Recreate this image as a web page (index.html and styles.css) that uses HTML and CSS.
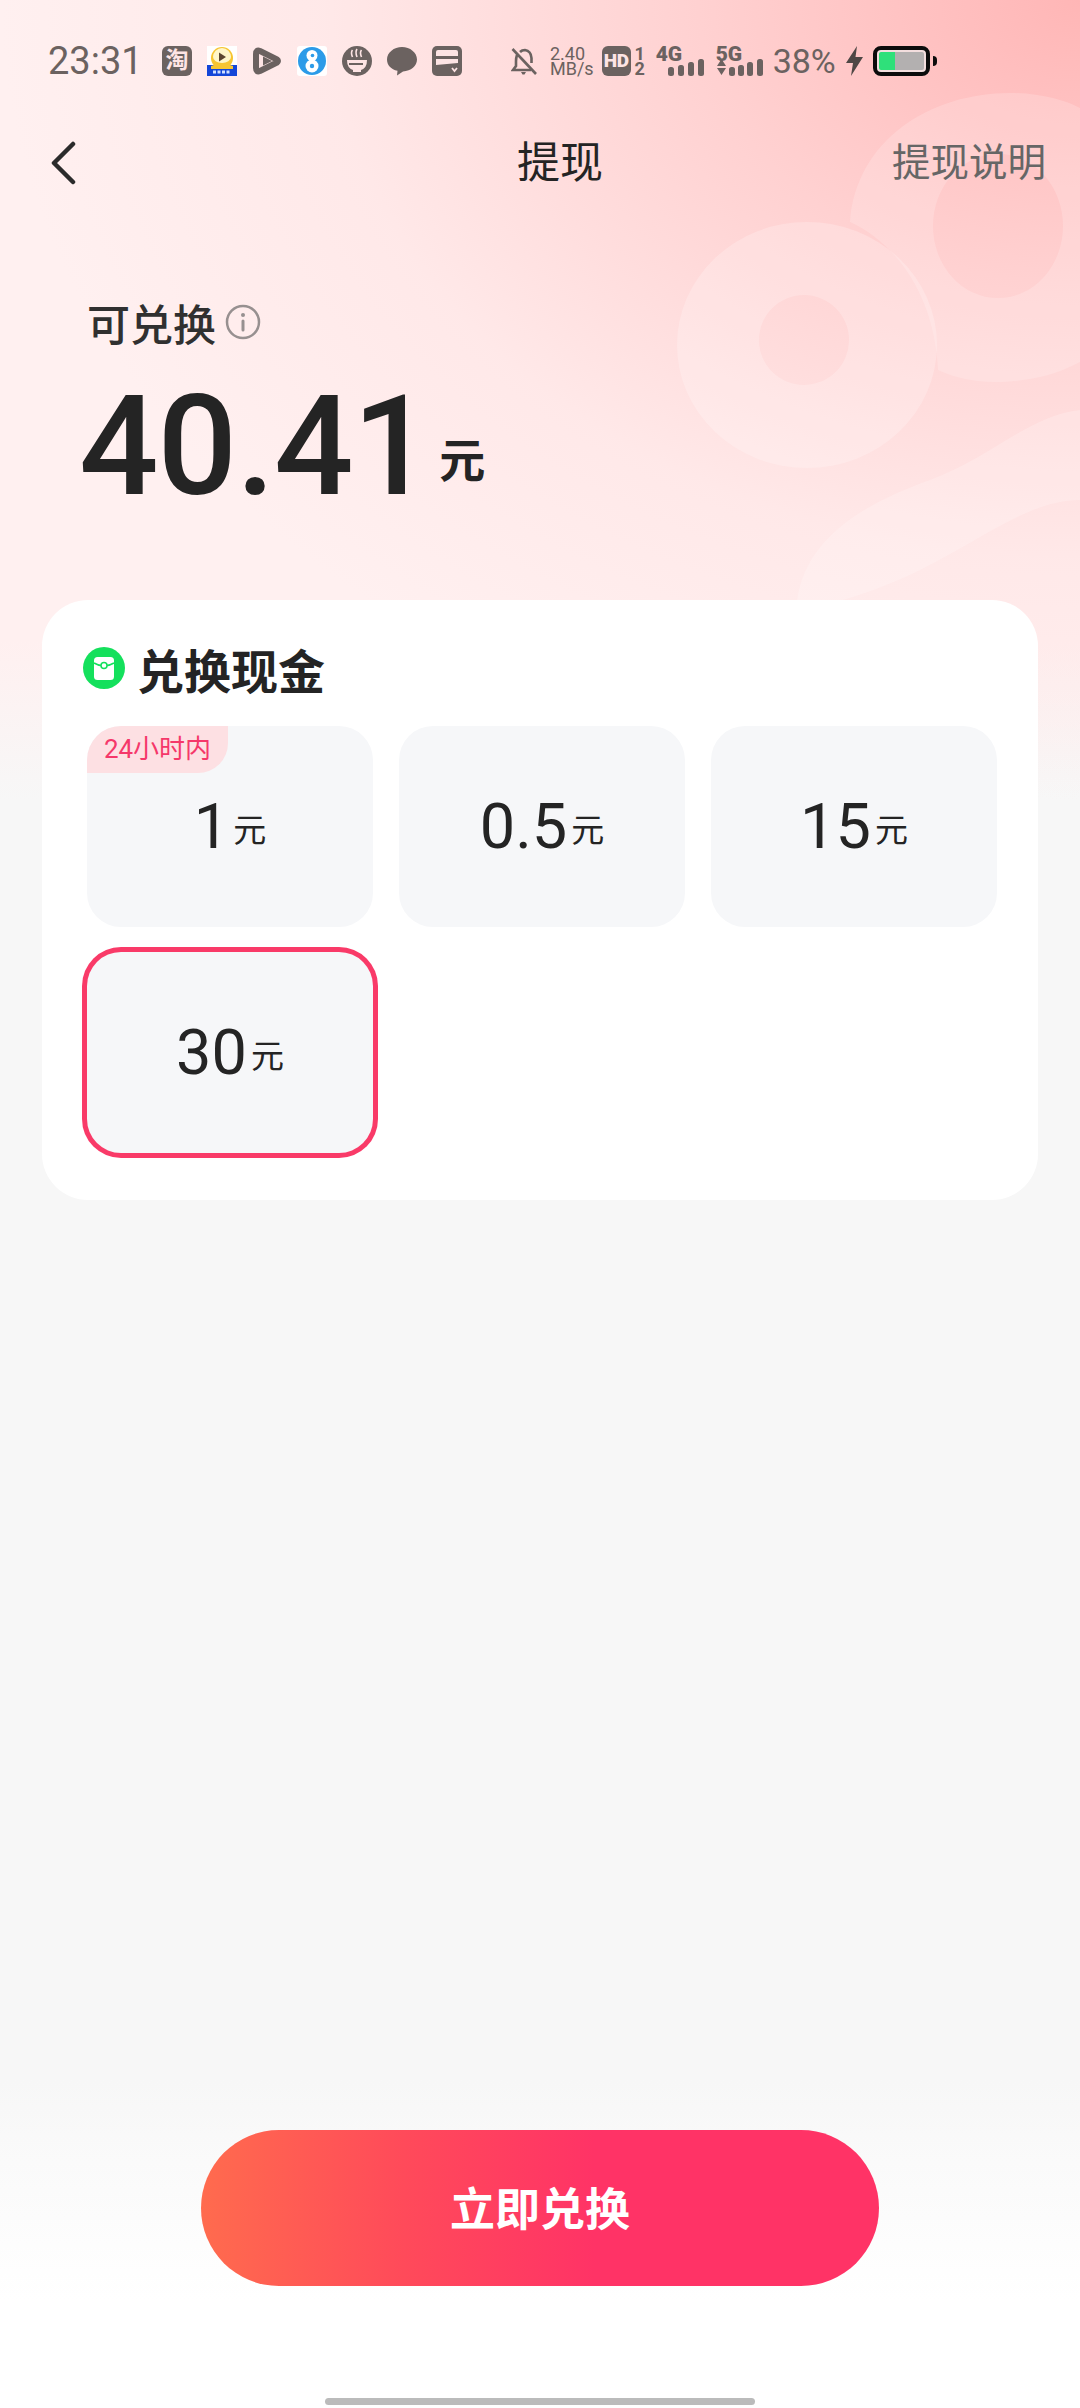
FILE: index.html
```html
<!DOCTYPE html>
<html lang="zh-CN">
<head>
  <meta charset="UTF-8" />
  <meta name="viewport" content="width=device-width, initial-scale=1" />
  <title>提现</title>
  <link rel="stylesheet" href="styles.css">
</head>
<body>
  <div class="page">
    <svg class="hero-art" width="1080" height="800" viewBox="0 0 1080 800">
      <path fill-rule="evenodd" fill="#fff" fill-opacity=".22" d="M677 345a130 123 0 1 0 260 0a130 123 0 1 0 -260 0z M759 340a45 45 0 1 0 90 0a45 45 0 1 0 -90 0z"/>
      <path fill-rule="evenodd" fill="#fff" fill-opacity=".18" d="M850 222C856 140 930 93 1010 93C1040 93 1065 100 1080 108V362C1050 378 1020 382 995 382C975 382 955 378 938 370C935 300 900 245 850 222z M933 226a65 72 0 1 0 130 0a65 72 0 1 0 -130 0z"/>
      <path fill="#fff" fill-opacity=".2" d="M797 601C805 540 860 505 930 480C990 458 1030 415 1080 410V500C1030 500 980 540 920 570C890 585 860 595 840 601z"/>
    </svg>

    <div class="status">
      <span class="time">23:31</span>
      <div class="apps">
        <span class="app app-tao">淘</span>
        <svg class="app" viewBox="0 0 30 30">
          <rect width="30" height="30" fill="#fff"/>
          <rect y="19" width="30" height="11" fill="#1346d8"/>
          <circle cx="15" cy="12" r="11" fill="#f7c531"/>
          <path d="M4 20Q15 15 26 20V23H4z" fill="#f7c531"/>
          <path d="M6 11a9 9 0 0 1 18 0a9 6 0 0 1-18 0z" fill="#fff6c8"/>
          <path d="M12 6.500l7 4.500l-7 4.500z" fill="#5c4630"/>
          <path d="M6 26h18" stroke="#cfe0ff" stroke-width="3" stroke-dasharray="3 1.500"/>
        </svg>
        <svg class="app" viewBox="0 0 30 30">
          <path d="M8 5L25 13.500Q27 15 25 16.500L8 25Q4 26.500 4 22V8Q4 3.500 8 5z" fill="#fde4e4" stroke="#6b6260" stroke-width="6" stroke-linejoin="round"/>
          <path d="M11 10.500L20 15L11 19.500z" fill="#6b6260"/>
        </svg>
        <svg class="app" viewBox="0 0 30 30">
          <rect width="30" height="30" rx="3" fill="#fff"/>
          <circle cx="15" cy="15" r="14" fill="#2c9be8"/>
          <circle cx="15" cy="9.500" r="5.500" fill="#fff"/>
          <circle cx="15" cy="20" r="6.500" fill="#fff"/>
          <circle cx="15.500" cy="9.500" r="1.800" fill="#2c9be8"/>
          <circle cx="15" cy="20" r="2.200" fill="#2c9be8"/>
        </svg>
        <svg class="app" viewBox="0 0 30 30">
          <circle cx="15" cy="15" r="15" fill="#6b6260"/>
          <path d="M5 14H25Q25 22 19 24V26H11V24Q5 22 5 14z" fill="#fde4e4"/>
          <path d="M7 18H21" stroke="#6b6260" stroke-width="2"/>
          <path d="M10.500 4q-2 2.500 0 7M15 3q-2 3 0 8M19.500 4q-2 2.500 0 7" fill="none" stroke="#fde4e4" stroke-width="1.600"/>
        </svg>
        <svg class="app" viewBox="0 0 30 30">
          <path d="M15 1C23 1 30 6.500 30 13.500C30 20 24 25 16 25.500L10 29.500L10.500 24.800C4 23.500 0 19 0 13.500C0 6.500 7 1 15 1z" fill="#6b6260"/>
        </svg>
        <svg class="app" viewBox="0 0 30 30">
          <rect width="30" height="30" rx="5" fill="#6b6260"/>
          <path d="M4 6Q4 4 6 4H24Q26 4 26 6V10H4z" fill="#fde4e4"/>
          <path d="M4 13H26V17L4 19z" fill="#fde4e4"/>
          <path d="M20 22l2.500 3l2.500-3" fill="none" stroke="#fde4e4" stroke-width="1.800"/>
        </svg>
      </div>
      <div class="sys">
        <svg class="bell" width="26" height="30" viewBox="0 0 26 30">
          <path d="M6 9Q5 12 5 15V20L2 24H20M9 6Q11 4 14 4Q20 5 20.500 12V17" fill="none" stroke="#6b6260" stroke-width="2.600"/>
          <path d="M10 26h5l-1.500 2.500h-2z" fill="#6b6260"/>
          <path d="M1.500 3L25 28" stroke="#6b6260" stroke-width="2.600"/>
        </svg>
        <span class="speed">2.40<br>MB/s</span>
        <span class="hd">HD</span>
        <span class="sim">1<br>2</span>
        <span class="net net-4g">
          <b>4G</b>
          <svg width="36" height="18" viewBox="0 0 36 18">
            <rect x="0" y="9" width="6" height="9" rx="2.500"/>
            <rect x="10" y="7" width="6" height="11" rx="2.500"/>
            <rect x="20" y="4" width="6" height="14" rx="2.500"/>
            <rect x="30" y="1" width="6" height="17" rx="2.500"/>
          </svg>
        </span>
        <span class="net net-5g">
          <b>5G</b>
          <svg width="48" height="18" viewBox="0 0 48 18">
            <path d="M1 8L5.500 1L10 8zM1 10H10L5.500 17z"/>
            <rect x="13" y="9" width="6" height="9" rx="2.500"/>
            <rect x="22" y="7" width="6" height="11" rx="2.500"/>
            <rect x="31" y="4" width="6" height="14" rx="2.500"/>
            <rect x="41" y="1" width="6" height="17" rx="2.500"/>
          </svg>
        </span>
        <span class="percent">38%</span>
        <svg class="bolt" width="17" height="30" viewBox="0 0 17 30">
          <path d="M11 0L0 17H7L5 30L17 11H9.500z" fill="#4f4745"/>
        </svg>
        <div class="battery"><div class="battery-level"></div></div>
        <span class="battery-tip"></span>
      </div>
    </div>

    <div class="nav">
      <svg class="back" width="26" height="44" viewBox="0 0 26 44">
        <path d="M23 3L4 22L23 41" fill="none" stroke="#2b2b2b" stroke-width="4.500" stroke-linecap="round" stroke-linejoin="round"/>
      </svg>
      <span class="nav-title">提现</span>
      <a class="nav-link">提现说明</a>
    </div>

    <div class="summary">
      <div class="summary-label">
        <span>可兑换</span>
        <svg width="36" height="36" viewBox="0 0 36 36">
          <circle cx="18" cy="18" r="16" fill="none" stroke="#979090" stroke-width="2.500"/>
          <circle cx="18" cy="11" r="2" fill="#979090"/>
          <rect x="16.500" y="15.500" width="3" height="12" rx="1.500" fill="#979090"/>
        </svg>
      </div>
      <div class="summary-value">
        <span class="amount">40.41</span>
        <span class="amount-unit">元</span>
      </div>
    </div>

    <div class="card">
      <div class="card-title">
        <svg width="42" height="42" viewBox="0 0 42 42">
          <circle cx="21" cy="21" r="21" fill="#14e05c"/>
          <rect x="11" y="10" width="20" height="23" rx="3.500" fill="#fff"/>
          <path d="M11 16Q21 22 31 16" fill="none" stroke="#14e05c" stroke-width="1.500"/>
          <circle cx="21" cy="18.500" r="3" fill="#fff" stroke="#14e05c" stroke-width="1.500"/>
        </svg>
        <span>兑换现金</span>
      </div>
      <div class="options">
        <div class="option">
          <span class="option-tag">24小时内</span>
          <span class="option-num">1</span><span class="option-unit">元</span>
        </div>
        <div class="option">
          <span class="option-num">0.5</span><span class="option-unit">元</span>
        </div>
        <div class="option">
          <span class="option-num">15</span><span class="option-unit">元</span>
        </div>
        <div class="option selected">
          <span class="option-num">30</span><span class="option-unit">元</span>
        </div>
      </div>
    </div>

    <button class="submit">立即兑换</button>
    <div class="home-bar"></div>
  </div>
</body>
</html>
```

FILE: styles.css
```css
* {
  box-sizing: border-box;
}

body {
  margin: 0;
  font-family: Roboto, "Noto Sans CJK SC", sans-serif;
  color: #242424;
}

.page {
  position: relative;
  width: 1080px;
  height: 2408px;
  display: flex;
  flex-direction: column;
  overflow: hidden;
  background:
    radial-gradient(ellipse 1080px 800px at 100% 0, #ffb6b6 0%, rgba(255, 200, 200, .78) 35%, rgba(255, 222, 222, .42) 70%, rgba(255, 235, 235, 0) 100%),
    linear-gradient(180deg, #fff0f0 0, #fff0f0 640px, #f7f7f7 800px, #f7f7f7 2080px, #fff 2300px);
}

.hero-art {
  position: absolute;
  top: 0;
  left: 0;
}

/* status bar */
.status {
  position: relative;
  display: flex;
  align-items: center;
  height: 30px;
  margin-top: 46px;
  padding-left: 48px;
  color: #6b6260;
}

.time {
  width: 114px;
  font-size: 38px;
  line-height: 30px;
}

.apps {
  display: flex;
  gap: 15px;
}

.app {
  display: block;
  width: 30px;
  height: 30px;
}

.app-tao {
  border-radius: 6px;
  background: #6b6260;
  color: #fde4e4;
  font-size: 23px;
  font-weight: 700;
  line-height: 30px;
  text-align: center;
}

.sys {
  display: flex;
  align-items: center;
  margin-left: 49px;
}

.speed {
  margin-left: 13px;
  font-size: 18px;
  line-height: 15px;
}

.hd {
  width: 29px;
  height: 30px;
  margin-left: 8px;
  border-radius: 6px;
  background: #6b6260;
  color: #fde4e4;
  font-size: 19px;
  font-weight: 900;
  letter-spacing: -.5px;
  line-height: 30px;
  text-align: center;
}

.sim {
  width: 12px;
  margin-left: 3px;
  font-size: 18px;
  font-weight: 700;
  line-height: 15px;
  text-align: center;
}

.net {
  position: relative;
  display: block;
  height: 30px;
  margin-left: 10px;
}

.net b {
  position: absolute;
  top: -2px;
  left: 0;
  font-size: 21px;
  line-height: 20px;
  font-weight: 900;
}

.net svg {
  display: block;
  fill: #6b6260;
  margin-top: 12px;
}

.net-4g {
  width: 47px;
}

.net-4g svg {
  margin-left: 12px;
}

.net-5g {
  width: 47px;
  margin-left: 13px;
}

.percent {
  margin-left: 10px;
  font-size: 34px;
  line-height: 30px;
}

.bolt {
  margin-left: 10px;
}

.battery {
  width: 57px;
  height: 30px;
  margin-left: 10px;
  padding: 2px;
  border: 4px solid #0c0c0c;
  border-radius: 8px;
  background: #f3dede;
}

.battery-level {
  width: 100%;
  height: 100%;
  background: linear-gradient(90deg, #2fe07a 0 36%, #b3b0b0 36% 100%);
  border-radius: 2px;
}

.battery-tip {
  width: 4px;
  height: 10px;
  margin-left: 3px;
  border-radius: 0 4px 4px 0;
  background: #0c0c0c;
}

/* nav */
.nav {
  position: relative;
  display: flex;
  align-items: center;
  height: 60px;
  margin-top: 57px;
  padding: 0 34px 0 50px;
}

.nav-title {
  margin-left: 441px;
  font-size: 43px;
  line-height: 60px;
}

.nav-link {
  margin-left: auto;
  font-size: 38.500px;
  line-height: 60px;
  color: #666;
}

/* amount */
.summary {
  position: relative;
  padding-left: 87px;
}

.summary-label {
  display: flex;
  align-items: center;
  gap: 9px;
  height: 60px;
  margin-top: 99px;
  font-size: 43px;
  font-weight: 500;
  color: #303030;
}

.summary-value {
  display: flex;
  align-items: center;
  height: 140px;
  margin-top: 24px;
  margin-left: -8px;
}

.amount {
  font-size: 140px;
  font-weight: 500;
  line-height: 140px;
  letter-spacing: -1px;
}

.amount-unit {
  margin: 30px 0 0 8px;
  font-size: 46px;
  font-weight: 700;
  line-height: 60px;
}

/* card */
.card {
  position: relative;
  width: 996px;
  height: 600px;
  margin: 84px 0 0 42px;
  padding: 0 41px 0 45px;
  border-radius: 46px;
  background: #fff;
}

.card-title {
  display: flex;
  align-items: center;
  gap: 12px;
  height: 60px;
  margin: 38px 0 28px -4px;
  font-size: 47px;
  font-weight: 700;
}

.options {
  display: grid;
  grid-template-columns: repeat(3, 286px);
  grid-auto-rows: 201px;
  gap: 25px 26px;
}

.option {
  position: relative;
  display: flex;
  align-items: center;
  justify-content: center;
  gap: 4px;
  border-radius: 34px;
  background: #f6f7f9;
}

.option.selected {
  box-shadow: 0 0 0 5px #f93a68;
}

.option-tag {
  position: absolute;
  top: 0;
  left: 0;
  width: 141px;
  height: 47px;
  border-radius: 34px 0 30px 0;
  background: #fde0e3;
  color: #f5386a;
  font-size: 26px;
  line-height: 47px;
  text-align: center;
}

.option-num {
  font-size: 63px;
  line-height: 70px;
}

.option-unit {
  margin-top: 8px;
  font-size: 33px;
  line-height: 40px;
}

/* bottom */
.submit {
  position: relative;
  display: block;
  width: 678px;
  height: 156px;
  margin: auto 0 0 201px;
  padding: 0 0 4px;
  border: none;
  border-radius: 78px;
  background: linear-gradient(90deg, #ff6b4e 0%, #ff4a5a 30%, #ff3366 58%, #ff3366 100%);
  color: #fff;
  font-family: inherit;
  font-size: 45px;
  font-weight: 700;
}

.home-bar {
  position: relative;
  width: 430px;
  height: 7px;
  margin: 112px 0 3px 325px;
  border-radius: 4px;
  background: #bbb;
}
```
